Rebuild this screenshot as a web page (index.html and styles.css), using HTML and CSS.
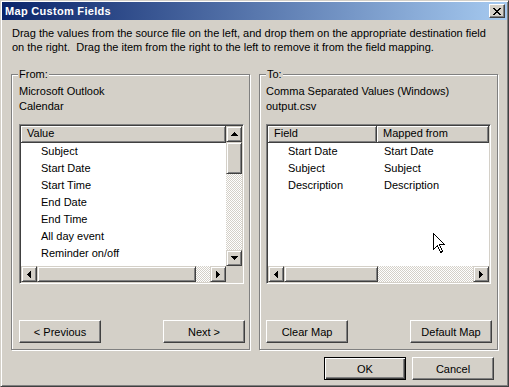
FILE: index.html
```html
<!DOCTYPE html>
<html lang="en">
<head>
    <meta charset="UTF-8">
    <title>Map Custom Fields</title>
    <link rel="stylesheet" href="styles.css">
</head>
<body>
    <div class="window">
        <div class="titlebar">
            <span class="title">Map Custom Fields</span>
            <span class="close">
                <svg width="8" height="7" viewBox="0 0 8 7" shape-rendering="crispEdges"><path d="M0 0h2v1h-2z M6 0h2v1h-2z M1 1h2v1h-2z M5 1h2v1h-2z M2 2h4v1h-4z M3 3h2v1h-2z M2 4h4v1h-4z M1 5h2v1h-2z M5 5h2v1h-2z M0 6h2v1h-2z M6 6h2v1h-2z" fill="#000"/></svg>
            </span>
        </div>

        <p class="intro">Drag the values from the source file on the left, and drop them on the appropriate destination field<br>on the right. &nbsp;Drag the item from the right to the left to remove it from the field mapping.</p>

        <div class="groups">
            <div class="group group-from">
                <div class="legend">From:</div>
                <div class="info first">Microsoft Outlook</div>
                <div class="info">Calendar</div>

                <div class="list list-scroll">
                    <div class="list-main">
                        <div class="header">
                            <div class="col">Value</div>
                        </div>
                        <div class="row"><span class="cell">Subject</span></div>
                        <div class="row"><span class="cell">Start Date</span></div>
                        <div class="row"><span class="cell">Start Time</span></div>
                        <div class="row"><span class="cell">End Date</span></div>
                        <div class="row"><span class="cell">End Time</span></div>
                        <div class="row"><span class="cell">All day event</span></div>
                        <div class="row"><span class="cell">Reminder on/off</span></div>
                        <div class="row"><span class="cell">Reminder Date</span></div>
                    </div>
                    <div class="vscroll">
                        <div class="sbtn"><svg width="7" height="4" viewBox="0 0 7 4" shape-rendering="crispEdges"><path d="M3 0h1v1h-1z M2 1h3v1h-3z M1 2h5v1h-5z M0 3h7v1h-7z" fill="#000"/></svg></div>
                        <div class="thumb thumb-v"></div>
                        <div class="track"></div>
                        <div class="sbtn"><svg width="7" height="4" viewBox="0 0 7 4" shape-rendering="crispEdges"><path d="M0 0h7v1h-7z M1 1h5v1h-5z M2 2h3v1h-3z M3 3h1v1h-1z" fill="#000"/></svg></div>
                    </div>
                    <div class="hscroll">
                        <div class="sbtn"><svg width="4" height="7" viewBox="0 0 4 7" shape-rendering="crispEdges"><path d="M3 0h1v7h-1z M2 1h1v5h-1z M1 2h1v3h-1z M0 3h1v1h-1z" fill="#000"/></svg></div>
                        <div class="thumb thumb-left"></div>
                        <div class="track"></div>
                        <div class="sbtn"><svg width="4" height="7" viewBox="0 0 4 7" shape-rendering="crispEdges"><path d="M0 0h1v7h-1z M1 1h1v5h-1z M2 2h1v3h-1z M3 3h1v1h-1z" fill="#000"/></svg></div>
                    </div>
                    <div class="corner"></div>
                </div>

                <div class="actions">
                    <button class="btn">&lt; Previous</button>
                    <button class="btn">Next &gt;</button>
                </div>
            </div>

            <div class="group group-to">
                <div class="legend">To:</div>
                <div class="info first">Comma Separated Values (Windows)</div>
                <div class="info">output.csv</div>

                <div class="list list-plain">
                    <div class="list-main">
                        <div class="header">
                            <div class="col col-field">Field</div>
                            <div class="col col-mapped">Mapped from</div>
                        </div>
                        <div class="row"><span class="cell cell-field">Start Date</span><span class="cell cell-mapped">Start Date</span></div>
                        <div class="row"><span class="cell cell-field">Subject</span><span class="cell cell-mapped">Subject</span></div>
                        <div class="row"><span class="cell cell-field">Description</span><span class="cell cell-mapped">Description</span></div>
                    </div>
                    <div class="hscroll">
                        <div class="sbtn"><svg width="4" height="7" viewBox="0 0 4 7" shape-rendering="crispEdges"><path d="M3 0h1v7h-1z M2 1h1v5h-1z M1 2h1v3h-1z M0 3h1v1h-1z" fill="#000"/></svg></div>
                        <div class="thumb thumb-right"></div>
                        <div class="track"></div>
                        <div class="sbtn"><svg width="4" height="7" viewBox="0 0 4 7" shape-rendering="crispEdges"><path d="M0 0h1v7h-1z M1 1h1v5h-1z M2 2h1v3h-1z M3 3h1v1h-1z" fill="#000"/></svg></div>
                    </div>
                </div>

                <div class="actions">
                    <button class="btn">Clear Map</button>
                    <button class="btn">Default Map</button>
                </div>
            </div>
        </div>

        <div class="footer">
            <button class="btn btn-default">OK</button>
            <button class="btn">Cancel</button>
        </div>

        <svg class="cursor" width="12" height="20" viewBox="0 0 12 20" shape-rendering="crispEdges"><path d="M0.5 0.5 L0.5 16.5 L4.5 12.5 L7.5 19.5 L9.5 18.5 L6.5 11.5 L11.5 11.5 Z" fill="#fff" stroke="#000" stroke-width="1"/></svg>
    </div>
</body>
</html>
```

FILE: styles.css
```css
* {
    box-sizing: border-box;
}

body {
    margin: 0;
    background: #d4d0c8;
    font-family: "Liberation Sans", Arial, sans-serif;
    font-size: 11px;
    color: #000;
}

.window {
    position: relative;
    width: 509px;
    height: 387px;
    background: #d4d0c8;
    border: 1px solid;
    border-color: #d4d0c8 #404040 #404040 #d4d0c8;
    box-shadow: inset 1px 1px #fff, inset -1px -1px #808080;
    padding: 1px;
    display: flex;
    flex-direction: column;
}

.titlebar {
    height: 18px;
    display: flex;
    align-items: center;
    justify-content: space-between;
    padding: 0 2px 0 3px;
    background: linear-gradient(to right, #0a246a, #a6caf0);
}

.title {
    color: #fff;
    font-weight: bold;
    font-size: 11px;
    letter-spacing: 0.3px;
}

.close {
    width: 16px;
    height: 14px;
    display: flex;
    align-items: center;
    justify-content: center;
    background: #d4d0c8;
    border: 1px solid;
    border-color: #fff #404040 #404040 #fff;
    box-shadow: inset -1px -1px #808080;
}

.intro {
    margin: 6px 0 0;
    padding-left: 10px;
    line-height: 14px;
    white-space: nowrap;
}

.groups {
    display: flex;
    gap: 9px;
    margin: 20px 0 0 9px;
}

.group {
    width: 239px;
    height: 276px;
    display: flex;
    flex-direction: column;
    border: 1px solid #808080;
    box-shadow: inset 1px 1px #fff, 1px 1px #fff;
    padding: 0 5px 0 7px;
}

.group-to {
    padding: 0 6px 0 6px;
}

.legend {
    align-self: flex-start;
    margin: -8px 0 0 -1px;
    padding: 0 1px;
    line-height: 14px;
    background: #d4d0c8;
}

.group-to .legend {
    margin-left: 0;
}

.info {
    line-height: 15px;
}

.info.first {
    margin-top: 3px;
}

.list {
    margin-top: 10px;
    width: 225px;
    height: 160px;
    display: grid;
    grid-template-rows: 1fr 16px;
    border: 1px solid;
    border-color: #808080 #fff #fff #808080;
    box-shadow: inset 1px 1px #404040, inset -1px -1px #d4d0c8;
    padding: 1px;
    background: #fff;
}

.list-scroll {
    grid-template-columns: 1fr 16px;
}

.list-plain {
    grid-template-columns: 1fr;
}

.list-main {
    overflow: hidden;
    background: #fff;
}

.header {
    display: flex;
    height: 17px;
    background: #d4d0c8;
}

.col {
    flex: 1;
    line-height: 15px;
    padding-left: 6px;
    border-right: 1px solid #404040;
    border-bottom: 1px solid #404040;
    box-shadow: inset 1px 1px #fff, inset -1px -1px #808080;
}

.col-field {
    flex: 0 0 109px;
}

.row {
    display: flex;
    height: 17px;
    line-height: 17px;
}

.cell {
    padding-left: 20px;
    white-space: nowrap;
}

.cell-field {
    width: 109px;
}

.cell-mapped {
    padding-left: 7px;
}

.vscroll {
    display: flex;
    flex-direction: column;
}

.hscroll {
    display: flex;
}

.sbtn {
    flex: 0 0 16px;
    width: 16px;
    height: 16px;
    display: flex;
    align-items: center;
    justify-content: center;
    background: #d4d0c8;
    border: 1px solid;
    border-color: #d4d0c8 #404040 #404040 #d4d0c8;
    box-shadow: inset 1px 1px #fff, inset -1px -1px #808080;
}

.thumb {
    background: #d4d0c8;
    border: 1px solid;
    border-color: #d4d0c8 #404040 #404040 #d4d0c8;
    box-shadow: inset 1px 1px #fff, inset -1px -1px #808080;
}

.thumb-v {
    flex: 0 0 32px;
}

.thumb-left {
    flex: 0 0 159px;
}

.thumb-right {
    flex: 0 0 94px;
}

.track {
    flex: 1;
    background: repeating-conic-gradient(#fff 0 25%, #d4d0c8 0 50%) 0 0 / 2px 2px;
}

.corner {
    background: #d4d0c8;
}

.actions {
    display: flex;
    justify-content: space-between;
    margin: 36px -1px 0 0;
}

.btn {
    width: 82px;
    height: 23px;
    padding: 0;
    font-family: "Liberation Sans", Arial, sans-serif;
    font-size: 11px;
    color: #000;
    background: #d4d0c8;
    border: 1px solid;
    border-color: #fff #404040 #404040 #fff;
    box-shadow: inset -1px -1px #808080;
}

.btn-default {
    border-color: #000;
    box-shadow: inset 1px 1px #fff, inset -1px -1px #404040, inset -2px -2px #808080;
}

.footer {
    display: flex;
    justify-content: flex-end;
    gap: 6px;
    margin-top: 7px;
    padding-right: 13px;
}

.cursor {
    position: absolute;
    left: 432px;
    top: 232px;
}
```
